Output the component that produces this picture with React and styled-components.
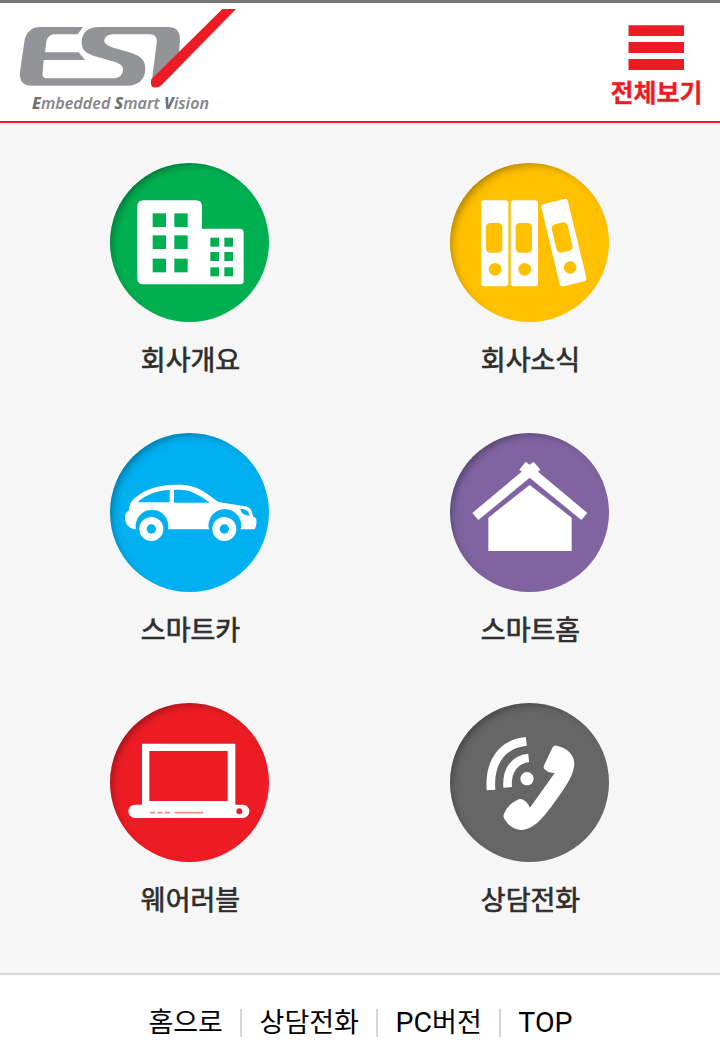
import React from "react";
import styled, { createGlobalStyle } from "styled-components";

const GlobalStyle = createGlobalStyle`
  * { box-sizing: border-box; }
  body {
    margin: 0;
    background: #fff;
    font-family: "Noto Sans CJK KR", "Noto Sans", sans-serif;
  }
`;

const Page = styled.div`
  height: 1043px;
  overflow: hidden;
  display: flex;
  flex-direction: column;
  border-top: 3px solid #777;
`;

const Header = styled.header`
  flex: none;
  height: 120px;
  display: flex;
  justify-content: space-between;
  background: #fff;
  border-bottom: 2px solid #ed1c24;
`;

const LogoMark = styled.svg`
  display: block;
  width: 260px;
  height: 118px;
`;

const MenuButton = styled.button`
  width: 127px;
  padding: 22px 0 0;
  border: 0;
  background: none;
  display: flex;
  flex-direction: column;
  align-items: center;
  color: #ed1c24;
  font: 700 25px/36px "Noto Sans CJK KR", sans-serif;
`;

const Bars = styled.svg`
  display: block;
  width: 56px;
  height: 46px;
  margin-right: 1px;
`;

const MenuText = styled.span`
  margin-top: 2px;
  white-space: nowrap;
  -webkit-text-stroke: 0.3px currentColor;
`;

const Grid = styled.main`
  flex: none;
  height: 852px;
  padding: 40px 20px 0;
  display: grid;
  grid-template-columns: 340px 340px;
  grid-auto-rows: 270px;
  background: #f6f6f6;
  border-bottom: 2px solid #d5d5d5;
`;

const Tile = styled.a`
  display: flex;
  flex-direction: column;
  align-items: center;
  color: #2d2d2d;
`;

const Disc = styled.div`
  width: 159px;
  height: 159px;
  margin-right: 1px;
  border-radius: 50%;
  background: ${(p) => p.$color};
  box-shadow: inset 5px 5px 9px -4px rgba(0, 0, 0, 0.36);
`;

const Glyph = styled.svg`
  display: block;
  width: 159px;
  height: 159px;
`;

const Label = styled.span`
  margin: 17px 0 0 1px;
  font-size: 27px;
  line-height: 40px;
  -webkit-text-stroke: 0.7px currentColor;
`;

const Footer = styled.footer`
  flex: 1;
  display: flex;
  justify-content: center;
  padding: 26px 0 0 1px;
  background: #fff;
`;

const FooterLink = styled.a`
  font-size: 27px;
  line-height: 40px;
  height: 40px;
  color: #000;
  white-space: nowrap;
`;

const Latin = styled.span`
  font-family: Roboto, sans-serif;
  font-size: 28.5px;
  line-height: 1;
`;

const Divider = styled.i`
  width: 2px;
  height: 28px;
  margin: 8px 17.3px 0;
  background: #d5d5d5;
`;

function Logo() {
  return (
    <LogoMark viewBox="0 9 780 354">
      <path
        fill="#939498"
        fillRule="evenodd"
        d="M249 81H121C94 81 76 99 73 126L60 216C57 243 70 257 94 257H382C414 257 435 238 436 209C437 181 421 166 387 157L340 143C320 137 312 130 313 121C315 109 325 103 341 103H449C465 103 472 112 470 128L456 240L537 160L540 120C541 95 529 81 503 81H297C264 81 246 98 245 124C244 147 254 159 280 167L345 186C363 192 370 200 369 211C367 226 357 235 341 235H142C131 235 126 230 128 218L131 180H255L236 157H135L139 125C142 111 151 103 165 103H233Z"
      />
      <path fill="#ed1c24" d="M667 27H708L484 256C472 266 453 265 453 251V242C453 237 456 235 461 231Z" />
      <text
        x="96"
        y="328"
        fill="#85868a"
        fontFamily="'Noto Sans', sans-serif"
        fontSize="48"
        fontStyle="italic"
        fontWeight="600"
        textLength="531"
        lengthAdjust="spacingAndGlyphs"
      >
        <tspan fontWeight="800" fill="#6d6e72">E</tspan>mbedded <tspan fontWeight="800" fill="#6d6e72">S</tspan>mart <tspan fontWeight="800" fill="#6d6e72">V</tspan>ision
      </text>
    </LogoMark>
  );
}

const buildingWindows = [
  ...[190, 256, 326].flatMap((y) => [158, 223].map((x) => ({ x, y, w: 40, h: 41 }))),
  ...[263, 306, 352].flatMap((y) => [331, 373].map((x) => ({ x, y, w: 26, h: 27 }))),
];

function Building({ color }) {
  return (
    <>
      <path
        fill="#fff"
        d="M130 151H287Q306 151 306 170V236H419Q431 236 431 248V393Q431 403 421 403H130Q112 403 112 385V169Q112 151 130 151Z"
      />
      {buildingWindows.map((b) => (
        <rect key={`${b.x}-${b.y}`} x={b.x} y={b.y} width={b.w} height={b.h} fill={color} />
      ))}
    </>
  );
}

function Binder({ color, transform }) {
  return (
    <g transform={transform}>
      <rect width="82" height="258" rx="9" fill="#fff" />
      <rect x="15" y="68" width="49" height="89" rx="13" fill={color} />
      <circle cx="42" cy="207" r="19" fill={color} />
    </g>
  );
}

function Binders({ color }) {
  return (
    <>
      <Binder color={color} transform="translate(123 151)" />
      <Binder color={color} transform="translate(212 151)" />
      <Binder color={color} transform="translate(302 164) rotate(-13.5) scale(1 0.985)" />
    </>
  );
}

function Car({ color }) {
  return (
    <>
      <path
        fill="#fff"
        d="M108 328C86 326 74 311 75 290C76 279 82 276 87 270C88 252 95 241 108 231C137 207 177 195 222 194C268 193 289 200 318 219L355 246L435 259C452 262 456 272 459 289L468 295C472 309 467 321 464 328H422A49 49 0 1 0 327 328H204A49 49 0 1 0 108 328Z"
      />
      <path fill={color} d="M209 210V247H113C136 224 172 211 209 210ZM222 210C264 207 284 216 329 248H222ZM421 267C438 266 446 274 449 288C436 285 423 282 421 267Z" />
      {[154, 373].map((x) => (
        <g key={x}>
          <circle cx={x} cy="327" r="36" fill="#fff" />
          <circle cx={x} cy="327" r="14" fill={color} />
        </g>
      ))}
    </>
  );
}

function House() {
  return (
    <>
      <path fill="#fff" d="M269 195L395 293V393H145V293Z" />
      <path
        fill="#fff"
        d="M257 125L269 134L281 125L301 149L294 155L442 279L424 300L269 173L115 300L97 279L245 155L238 149Z"
      />
    </>
  );
}

function Laptop({ color }) {
  return (
    <>
      <path
        fill="#fff"
        fillRule="evenodd"
        d="M126 161H406V344H428A20 20 0 0 1 428 384H105A20 20 0 0 1 105 344H126ZM148 183V333H383V183Z"
      />
      <path d="M150 368H166M172 368H188M194 368H210M224 368H309" stroke={color} strokeWidth="5" opacity="0.5" />
      <circle cx="418" cy="364" r="9" fill={color} />
    </>
  );
}

function Phone() {
  return (
    <>
      <path
        fill="none"
        stroke="#fff"
        strokeWidth="26"
        d="M153 300C147 218 184 162 259 154M203 292C199 240 225 208 266 204"
      />
      <circle cx="261" cy="266" r="20" fill="#fff" />
      <path
        fill="#fff"
        d="M338 172Q343 164 353 168C382 175 402 194 403 220C403 251 381 285 350 328C312 381 282 420 243 420C217 419 198 399 191 382Q189 377 193 369C203 348 215 338 236 328Q243 325 249 329C260 335 265 342 270 353L344 249C330 249 321 245 313 237Q309 233 313 224Z"
      />
    </>
  );
}

const tiles = [
  { label: "회사개요", color: "#00b050", Icon: Building },
  { label: "회사소식", color: "#ffc000", Icon: Binders },
  { label: "스마트카", color: "#00b0f0", Icon: Car },
  { label: "스마트홈", color: "#8064a2", Icon: House },
  { label: "웨어러블", color: "#ed1c24", Icon: Laptop },
  { label: "상담전화", color: "#666666", Icon: Phone },
];

export default function App() {
  return (
    <Page>
      <GlobalStyle />
      <Header>
        <Logo />
        <MenuButton>
          <Bars viewBox="0 0 56 46">
            <path fill="#ed1c24" d="M0.5 .3H56V11H.5ZM.5 17H56V28H.5ZM.5 34H56V45H.5Z" />
          </Bars>
          <MenuText>전체보기</MenuText>
        </MenuButton>
      </Header>
      <Grid>
        {tiles.map(({ label, color, Icon }) => (
          <Tile key={label}>
            <Disc $color={color}>
              <Glyph viewBox="30 39 477 477">
                <Icon color={color} />
              </Glyph>
            </Disc>
            <Label>{label}</Label>
          </Tile>
        ))}
      </Grid>
      <Footer>
        <FooterLink>홈으로</FooterLink>
        <Divider />
        <FooterLink>상담전화</FooterLink>
        <Divider />
        <FooterLink>
          <Latin>PC</Latin>버전
        </FooterLink>
        <Divider />
        <FooterLink>
          <Latin>TOP</Latin>
        </FooterLink>
      </Footer>
    </Page>
  );
}
